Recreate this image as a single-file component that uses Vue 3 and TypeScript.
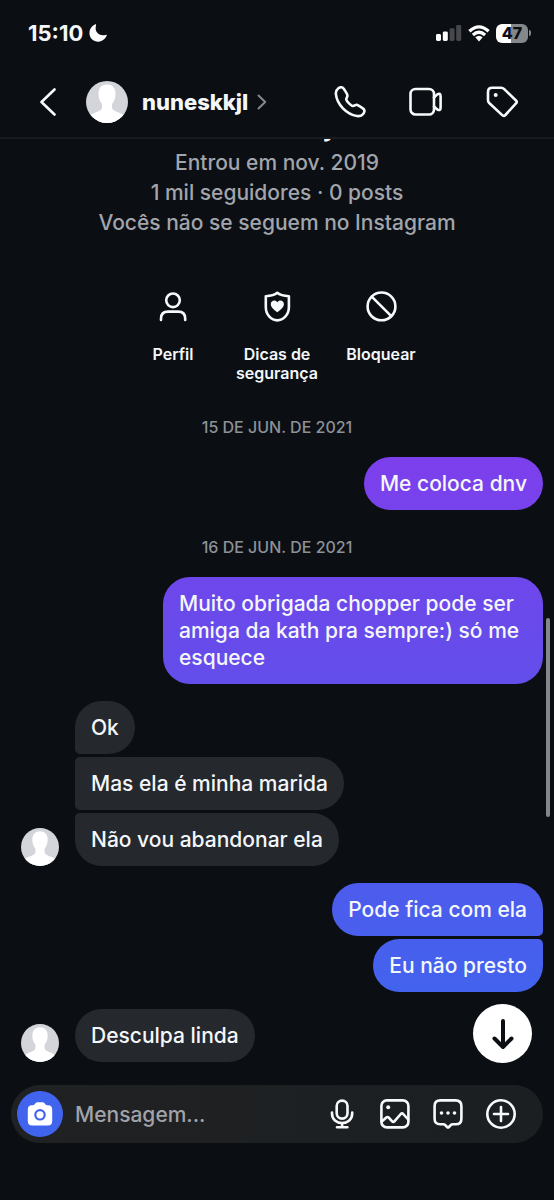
<script setup lang="ts">
import { ref } from 'vue'

interface Group {
  id: number
  date?: string
  from: 'me' | 'them'
  messages: string[]
}

const username = 'nuneskkjl'
const draft = ref('')

const profileLines: string[] = [
  'Entrou em nov. 2019',
  '1 mil seguidores · 0 posts',
  'Vocês não se seguem no Instagram',
]

const groups: Group[] = [
  { id: 1, date: '15 DE JUN. DE 2021', from: 'me', messages: ['Me coloca dnv'] },
  {
    id: 2,
    date: '16 DE JUN. DE 2021',
    from: 'me',
    messages: ['Muito obrigada chopper pode ser amiga da kath pra sempre:) só me esquece'],
  },
  { id: 3, from: 'them', messages: ['Ok', 'Mas ela é minha marida', 'Não vou abandonar ela'] },
  { id: 4, from: 'me', messages: ['Pode fica com ela', 'Eu não presto'] },
  { id: 5, from: 'them', messages: ['Desculpa linda'] },
]

const silhouette =
  'M21 3.5C15 3.5 12.500 7.500 12.500 13C12.500 16.500 13.500 20 16 23V26.500C16 31 6 31 2 36V42H40V36C36 31 26 31 26 26.500V23C28.500 20 29.500 16.500 29.500 13C29.500 7.500 27 3.500 21 3.500Z'
</script>

<template>
  <div class="screen">
    <header class="top">
      <div class="status">
        <div class="clock">
          <span>15:10</span>
          <svg class="moon" viewBox="0 0 18 18" aria-hidden="true">
            <path d="M5.800 .5C6.600 .1 7.300 .6 7 1.400C5.200 7.400 9.800 12.600 16.600 10.900C17.500 10.700 18 11.300 17.600 12.100C16 15.600 12.800 17.700 9.200 17.700C4.300 17.700 .4 13.900 .4 9C.4 5.200 2.500 2 5.800 .5Z" fill="#fff" />
          </svg>
        </div>
        <div class="indicators">
          <svg class="signal" viewBox="0 0 26 16" aria-hidden="true">
            <rect x="0" y="9" width="5" height="7" rx="1.4" fill="#fff" />
            <rect x="6.8" y="6.4" width="5" height="9.6" rx="1.4" fill="#fff" />
            <rect x="13.6" y="3.2" width="5" height="12.8" rx="1.4" fill="#46484b" />
            <rect x="20.2" y="0" width="5" height="16" rx="1.4" fill="#46484b" />
          </svg>
          <svg class="wifi" viewBox="0 0 22 17" aria-hidden="true">
            <g fill="none" stroke="#fff" stroke-width="3.2">
              <path d="M1.4 6.2Q11-2.6 20.6 6.2" />
              <path d="M4.9 10Q11 4.4 17.1 10" />
            </g>
            <path d="M7.3 12.3Q11 9.2 14.7 12.3L11 16.4Z" fill="#fff" />
          </svg>
          <div class="battery"><span class="level">47</span></div>
        </div>
      </div>
      <nav class="nav">
        <button class="back" type="button" aria-label="Voltar">
          <svg viewBox="0 0 18 28"><path d="M15.5 1.500L2.5 14L15.5 26.500" /></svg>
        </button>
        <a class="peer" href="#perfil">
          <svg class="avatar large" viewBox="0 0 42 42" aria-hidden="true">
            <rect width="42" height="42" fill="#d3d5da" />
            <path :d="silhouette" fill="#fff" />
          </svg>
          <span class="name">{{ username }}</span>
          <svg class="chevron" viewBox="0 0 10 16" aria-hidden="true">
            <path d="M1.500 1.500L8.200 8L1.500 14.500" />
          </svg>
        </a>
        <div class="calls">
          <button type="button" aria-label="Ligar">
            <svg viewBox="0 0 32 32">
              <path d="M9.600 2.600C8.400 .8 6.200 .8 4.400 2.200C2.200 3.900 1.600 5.600 1.900 8.200C3 18.500 12.500 28.400 23 30C25.600 30.400 27.600 30 29.200 28C30.800 26 31 24 29.200 22.600C27.200 21 25.400 19.600 23.400 18.900C21.600 18.300 20.800 19.800 19 20C17.600 20.200 12.600 15.600 12.300 13.600C12 12 13.600 11.200 13.400 9.400C13.200 7.400 11 4.600 9.600 2.600Z" />
            </svg>
          </button>
          <button type="button" aria-label="Chamada de vídeo">
            <svg viewBox="0 0 34 32">
              <rect x="1.500" y="3" width="23.500" height="25.500" rx="5" />
              <path d="M25 11.500L28.300 8.400Q31.600 6.400 31.600 10.400V21.400Q31.600 25.400 28.300 23.400L25 20.500" />
            </svg>
          </button>
          <button type="button" aria-label="Etiqueta">
            <svg viewBox="0 0 32 32">
              <path d="M2 6Q2 1.700 6.200 1.700H15.200Q16.800 1.700 18 2.900L30 14.500Q31.400 15.900 30 17.400L19.400 29Q17.800 30.600 16.200 29.100L3.200 17Q2 15.800 2 14.200Z" />
              <circle cx="9.700" cy="9" r="2" class="solid" />
            </svg>
          </button>
        </div>
      </nav>
    </header>

    <main class="chat">
      <section class="profile">
        <h1>{{ username }}</h1>
        <p v-for="line in profileLines" :key="line">{{ line }}</p>
        <div class="actions">
          <button type="button">
            <svg viewBox="0 0 32 32">
              <circle cx="16" cy="10.300" r="6.800" />
              <path d="M4 30V28.500Q4 21.600 11 21.600H21.200Q28.200 21.600 28.200 28.500V30" />
            </svg>
            <span>Perfil</span>
          </button>
          <button type="button">
            <svg viewBox="0 0 32 32">
              <path d="M16.300 2.800C13.500 5.200 9 6 4.800 6.200V17C4.800 25 10.500 30.400 16.300 30.400S27.900 25 27.900 17V6.200C23.500 6 19 5.200 16.300 2.800Z" />
              <path class="solid" d="M16.300 22.300C12.500 19.400 9.800 17.200 9.800 14.200C9.800 10.700 14 9.200 16.300 12.300C18.600 9.200 22.900 10.700 22.900 14.200C22.900 17.200 20.100 19.400 16.300 22.300Z" />
            </svg>
            <span>Dicas de segurança</span>
          </button>
          <button type="button">
            <svg viewBox="0 0 32 32">
              <circle cx="16.500" cy="16.400" r="13.900" />
              <path d="M6.700 6.600L26.300 26.200" />
            </svg>
            <span>Bloquear</span>
          </button>
        </div>
      </section>

      <template v-for="group in groups" :key="group.id">
        <time v-if="group.date" class="date">{{ group.date }}</time>
        <section class="group" :class="[group.from, { dated: group.date }]">
          <svg v-if="group.from === 'them'" class="avatar small" viewBox="0 0 42 42" aria-hidden="true">
            <rect width="42" height="42" fill="#d3d5da" />
            <path :d="silhouette" fill="#fff" />
          </svg>
          <div class="bubbles">
            <p v-for="message in group.messages" :key="message" class="bubble">{{ message }}</p>
          </div>
        </section>
      </template>

      <button class="jump" type="button" aria-label="Ir para o fim">
        <svg viewBox="0 0 24 32"><path d="M12 3V29M3.500 20.500L12 29L20.500 20.500" /></svg>
      </button>
      <div class="scrollbar"></div>
    </main>

    <footer class="footer">
      <form class="composer" @submit.prevent>
        <button class="camera" type="button" aria-label="Câmera">
          <svg viewBox="0 0 26 24">
            <path d="M8 1.800Q8.700 .3 10.300 .3H15.700Q17.300 .3 18 1.800Q18.500 3.200 20 3.200H21Q25.200 3.200 25.200 7.500V19Q25.200 23.500 20.700 23.500H5.300Q.8 23.500 .8 19V7.500Q.8 3.200 5 3.200H6Q7.500 3.200 8 1.800Z" fill="#fff" />
            <circle cx="13" cy="12.800" r="4.700" fill="none" stroke="#4164ee" stroke-width="2.200" />
          </svg>
        </button>
        <input v-model="draft" type="text" placeholder="Mensagem..." aria-label="Mensagem" />
        <div class="tools">
          <button type="button" aria-label="Gravar áudio">
            <svg viewBox="0 0 30 30">
              <rect x="9.700" y="1.600" width="10.800" height="18" rx="5.400" />
              <path d="M5 13.500V14.500C5 20.500 9.500 24 15.100 24S25.200 20.500 25.200 14.500V13.500M15.100 24V28M10 28.200H20.400" />
            </svg>
          </button>
          <button type="button" aria-label="Galeria">
            <svg viewBox="0 0 30 30">
              <rect x="1.400" y="1.400" width="27" height="27" rx="5.500" />
              <circle cx="8.200" cy="8.200" r="2" class="solid" />
              <path d="M1.800 22.500L6.300 18.500Q7.500 17.500 8.600 18.500L12.200 22.300Q13.300 23.400 14.400 22.300L20.800 15Q22 13.800 23.200 15L28.200 20.500" />
            </svg>
          </button>
          <button type="button" aria-label="Figurinhas">
            <svg viewBox="0 0 30 30">
              <path d="M7.400 1.400H22.600Q28.400 1.400 28.400 7.200V19.800Q28.400 25.300 22.800 25.300H19.600Q18.600 25.300 17.900 26L15.900 28Q15 28.900 14.100 28L12.100 26Q11.400 25.300 10.400 25.300H7.200Q1.600 25.300 1.600 19.800V7.200Q1.600 1.400 7.400 1.400Z" />
              <g class="solid">
                <circle cx="8.500" cy="14" r="1.800" />
                <circle cx="15" cy="14" r="1.800" />
                <circle cx="21.500" cy="14" r="1.800" />
              </g>
            </svg>
          </button>
          <button type="button" aria-label="Mais opções">
            <svg viewBox="0 0 30 30">
              <circle cx="15" cy="15" r="13.700" />
              <path d="M15 8V22M8 15H22" />
            </svg>
          </button>
        </div>
      </form>
    </footer>
  </div>
</template>

<style>
body {
  margin: 0;
  background: #0b0f13;
}
</style>

<style scoped>
.screen {
  display: flex;
  flex-direction: column;
  height: 100vh;
  background: #0b0f13;
  color: #f4f7fa;
  font-family: Inter, "Liberation Sans", sans-serif;
  font-weight: 500;
}

button {
  display: flex;
  flex: none;
  padding: 0;
  border: 0;
  background: none;
  color: inherit;
  font: inherit;
  cursor: pointer;
}

svg {
  display: block;
  flex: none;
}

button svg,
.chevron {
  fill: none;
  stroke: #f7f9fb;
  stroke-width: 2.6;
  stroke-linecap: round;
  stroke-linejoin: round;
}

button svg .solid {
  fill: #f7f9fb;
  stroke: none;
}

.top {
  flex: none;
  border-bottom: 2px solid #181c20;
}

.status {
  display: flex;
  align-items: center;
  justify-content: space-between;
  height: 66px;
  padding: 0 23px 0 28px;
}

.clock {
  display: flex;
  align-items: center;
  gap: 6px;
  font-size: 22px;
  font-weight: 700;
}

.moon {
  width: 18px;
  height: 18px;
}

.indicators {
  display: flex;
  align-items: center;
  gap: 6px;
}

.signal {
  width: 26px;
  height: 16px;
}

.wifi {
  width: 22px;
  height: 17px;
}

.battery {
  display: flex;
  align-items: center;
}

.battery::after {
  content: "";
  width: 2px;
  height: 6px;
  margin-left: 1px;
  border-radius: 0 3px 3px 0;
  background: #85888b;
}

.level {
  width: 32px;
  border-radius: 6px;
  background: linear-gradient(90deg, #fff 48%, #85888b 48%);
  color: #0b0f13;
  font-size: 16px;
  font-weight: 800;
  line-height: 19px;
  text-align: center;
}

.nav {
  display: flex;
  align-items: center;
  height: 71px;
  padding: 0 36px 0 39px;
}

.back svg {
  width: 18px;
  height: 28px;
}

.peer {
  display: flex;
  align-items: center;
  min-width: 0;
  margin-left: 29px;
  color: inherit;
  text-decoration: none;
}

.avatar {
  border-radius: 50%;
}

.large {
  width: 42px;
  height: 42px;
}

.small {
  width: 38px;
  height: 38px;
}

.name {
  margin-left: 14px;
  font-size: 22px;
  font-weight: 800;
}

.chevron {
  width: 10px;
  height: 16px;
  margin-left: 9px;
  stroke: #85898e;
  stroke-width: 2;
}

.calls {
  display: flex;
  gap: 43px;
  margin-left: auto;
}

.calls svg {
  width: auto;
  height: 32px;
}

.chat {
  position: relative;
  display: flex;
  flex: 1;
  flex-direction: column;
  justify-content: flex-end;
  min-height: 0;
  overflow: hidden;
  padding-bottom: 23px;
}

.profile {
  flex: none;
  color: #a2a5ac;
  font-size: 21px;
  line-height: 30px;
  text-align: center;
}

.profile h1 {
  margin: 0 0 5px;
  color: #f4f7fa;
  font-size: 26px;
  font-weight: 800;
  line-height: 32px;
}

.profile p {
  margin: 0;
}

.actions {
  display: flex;
  justify-content: center;
  margin: 52px 0 34px;
  color: #f4f7fa;
  font-size: 16px;
  font-weight: 600;
  line-height: 19px;
}

.actions button {
  flex-direction: column;
  align-items: center;
  width: 104px;
  gap: 23px;
}

.actions svg {
  width: 32px;
  height: 32px;
}

.date {
  flex: none;
  color: #8d9197;
  font-size: 16px;
  line-height: 20px;
  text-align: center;
}

.group + .date {
  margin-top: 27px;
}

.group {
  display: flex;
  flex: none;
  align-items: flex-end;
  gap: 16px;
  margin-top: 17px;
  padding: 0 11px 0 21px;
}

.group.dated {
  margin-top: 20px;
}

.bubbles {
  display: flex;
  flex-direction: column;
  align-items: flex-start;
  gap: 3px;
  max-width: 380px;
}

.me {
  justify-content: flex-end;
}

.me .bubbles {
  align-items: flex-end;
}

.bubble {
  margin: 0;
  padding: 13px 16px;
  border-radius: 27px;
  background: #25282d;
  font-size: 21px;
  line-height: 27px;
}

.me .bubble {
  background: linear-gradient(#7d3fec 38%, #624eeb 57%, #4263ee 83%) fixed;
}

.them .bubble:not(:last-child) {
  border-bottom-left-radius: 5px;
}

.them .bubble:not(:first-child) {
  border-top-left-radius: 5px;
}

.me .bubble:not(:last-child) {
  border-bottom-right-radius: 5px;
}

.me .bubble:not(:first-child) {
  border-top-right-radius: 5px;
}

.jump {
  position: absolute;
  right: 22px;
  bottom: 22px;
  align-items: center;
  justify-content: center;
  width: 59px;
  height: 59px;
  border-radius: 50%;
  background: #fff;
}

.jump svg {
  width: 24px;
  height: 32px;
  stroke: #0b0f13;
  stroke-width: 4;
}

.scrollbar {
  position: absolute;
  top: 479px;
  right: 4px;
  width: 4px;
  height: 199px;
  border-radius: 2px;
  background: #85888b;
}

.footer {
  flex: none;
  padding: 0 11px 57px;
}

.composer {
  display: flex;
  align-items: center;
  height: 58px;
  padding: 0 27px 0 6px;
  border-radius: 29px;
  background: linear-gradient(90deg, #202122, #1b1f22);
}

.camera {
  align-items: center;
  justify-content: center;
  width: 46px;
  height: 46px;
  border-radius: 50%;
  background: #4164ee;
}

.camera svg {
  width: 26px;
  height: 24px;
  stroke: none;
}

.composer input {
  flex: 1;
  min-width: 0;
  margin: 0 12px;
  padding: 0;
  border: 0;
  outline: 0;
  background: none;
  color: #f4f7fa;
  font: inherit;
  font-size: 21px;
}

.composer input::placeholder {
  color: #a0a3a9;
  opacity: 1;
}

.tools {
  display: flex;
  gap: 23px;
}

.tools svg {
  width: 30px;
  height: 30px;
}
</style>
